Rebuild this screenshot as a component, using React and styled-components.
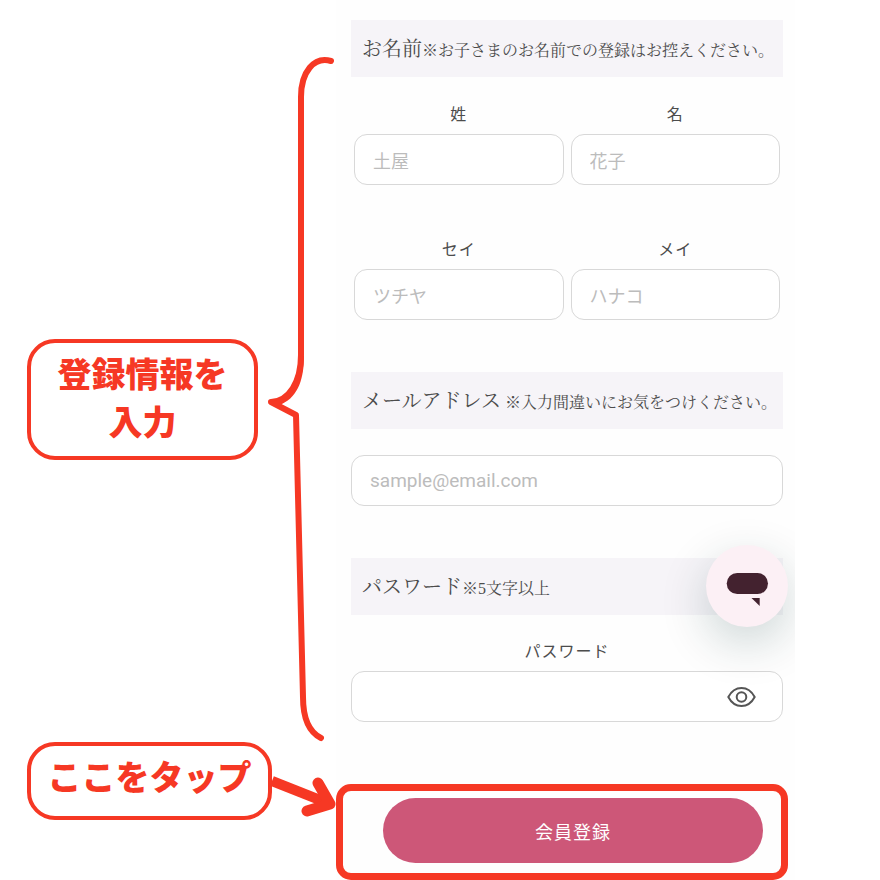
import React, { useState } from 'react';
import styled, { createGlobalStyle } from 'styled-components';

const GlobalStyle = createGlobalStyle`
  :root {
    --color-accent: #f63824;
    --color-primary: #cd5778;
    --color-text: #4c4c4c;
    --color-muted: #bcbcbc;
    --color-border: #d8d8d8;
    --font-sans: 'Noto Sans CJK JP', sans-serif;
    --font-serif: 'Liberation Serif', 'Noto Serif CJK JP', 'Noto Sans CJK JP', serif;
  }
  *, *::before, *::after {
    box-sizing: border-box;
  }
  body {
    margin: 0;
    background: #fff;
    color: var(--color-text);
    font-family: var(--font-sans);
  }
`;

const Page = styled.div`
  display: grid;
  grid-template-columns: 336fr 459fr 85fr;
`;

const Guide = styled.aside`
  min-width: 0;
  padding: 56px 0 0 27px;
`;

const GuideRow = styled.div`
  display: flex;
  align-items: center;
  gap: ${props => props.$gap || 0};
  padding-right: ${props => props.$end || 0};

  svg {
    flex: none;
    display: block;
  }
`;

const Note = styled.p`
  flex: 1;
  margin: 0;
  padding: ${props => props.$padding};
  border: 4px solid var(--color-accent);
  border-radius: 28px;
  color: var(--color-accent);
  font-size: 34px;
  font-weight: 900;
  line-height: 48px;
  text-align: center;
  white-space: nowrap;
`;

const Form = styled.form`
  min-width: 0;
  padding: 20px 12px 0 15px;
  overflow: hidden;
  background: #fefefe;
`;

const Section = styled.section`
  position: relative;
  display: flex;
  flex-direction: column;
  margin-bottom: ${props => props.$space || '52px'};
`;

const Heading = styled.h2`
  display: flex;
  align-items: baseline;
  gap: ${props => props.$gap || 0};
  margin: 0 0 ${props => props.$space || '25px'};
  padding: 13px 11px 12px;
  background: #f6f4f8;
  font-family: var(--font-serif);
  font-size: 20px;
  font-weight: 400;
  line-height: 32px;
  white-space: nowrap;
`;

const Hint = styled.small`
  font-size: 16px;
  line-height: 20px;
`;

const NameGrid = styled.div`
  display: grid;
  grid-template-columns: 1fr 1fr;
  gap: 52px 7px;
  padding: 0 3px;
`;

const Field = styled.div`
  display: flex;
  flex-direction: column;
  gap: 10px;
  min-width: 0;
`;

const Label = styled.label`
  font-size: 16px;
  letter-spacing: 1px;
  line-height: 22px;
  text-align: center;
`;

const InputBox = styled.div`
  display: flex;
  align-items: center;
  height: 51px;
  padding: 0 18px;
  border: 1px solid var(--color-border);
  border-radius: 13px;
  background: #fff;
`;

const Input = styled.input`
  flex: 1;
  min-width: 0;
  padding: 0;
  border: 0;
  outline: 0;
  background: none;
  color: var(--color-text);
  font-family: ${props => (props.type === 'email' ? "Roboto, 'Noto Sans CJK JP', sans-serif" : 'inherit')};
  font-size: ${props => (props.type === 'email' ? '19px' : '18px')};

  &::placeholder {
    color: var(--color-muted);
    opacity: 1;
  }
`;

const EyeButton = styled.button`
  display: flex;
  margin-right: 8px;
  padding: 0;
  border: 0;
  background: none;
  color: #555;
  cursor: pointer;
`;

const ChatButton = styled.button`
  position: absolute;
  top: -13px;
  right: -5px;
  width: 82px;
  height: 82px;
  padding: 0;
  border: 0;
  border-radius: 50%;
  background: #fcf0f5;
  box-shadow: 0 16px 48px rgba(0, 50, 50, 0.2);
  cursor: pointer;

  svg {
    display: block;
  }
`;

const SubmitFrame = styled.div`
  display: flex;
  margin: 0 -5px 0 -15px;
  padding: 7px 18px 10px 40px;
  border: 7px solid var(--color-accent);
  border-radius: 15px;
`;

const Submit = styled.button`
  flex: 1;
  height: 65px;
  border: 0;
  border-radius: 33px;
  background: var(--color-primary);
  color: #fff;
  font-family: inherit;
  font-size: 18px;
  letter-spacing: 1px;
  cursor: pointer;
`;

const Bracket = () => (
  <svg width="66" height="686" viewBox="268 56 66 686" fill="none" aria-hidden="true">
    <path
      d="M331 61C314 56 301 72 301 97V355C301 382 289 401 271 402L296 415L303 697C303 719 309 732 321 738"
      stroke="#f63824"
      strokeWidth="6"
      strokeLinecap="round"
      strokeLinejoin="round"
    />
    <path d="M271 402C284 400 298 384 301 355L304 356C304 377 299 396 282 404L279 406Z" fill="#f63824" />
  </svg>
);

const Arrow = () => (
  <svg width="64" height="78" viewBox="272 742 64 78" fill="none" aria-hidden="true">
    <path d="M272 781L325 802" stroke="#f63824" strokeWidth="10" />
    <path
      d="M318 783L330 804L307 811"
      stroke="#f63824"
      strokeWidth="11"
      strokeLinecap="round"
      strokeLinejoin="round"
    />
  </svg>
);

const EyeIcon = () => (
  <svg width="29" height="22" viewBox="0 0 29 22" fill="none" stroke="currentColor" strokeWidth="2">
    <path d="M1.3 11C4.5 5 9 2 14.5 2S24.5 5 27.7 11C24.5 17 20 20 14.5 20S4.5 17 1.3 11Z" strokeLinejoin="round" />
    <circle cx="14.5" cy="11" r="4.8" />
  </svg>
);

const ChatIcon = () => (
  <svg width="82" height="82" viewBox="0 0 82 82" fill="#43222f">
    <rect x="20.7" y="28" width="41.3" height="21" rx="10.5" />
    <path d="M45.5 53H53.7V61Z" />
  </svg>
);

const TextField = ({ id, label, placeholder }) => (
  <Field>
    <Label htmlFor={id}>{label}</Label>
    <InputBox>
      <Input id={id} type="text" placeholder={placeholder} />
    </InputBox>
  </Field>
);

const App = () => {
  const [visible, setVisible] = useState(false);

  return (
    <>
      <GlobalStyle />
      <Page>
        <Guide>
          <GuideRow $gap="10px" $end="2px">
            <Note $padding="6px 0 11px">
              登録情報を
              <br />
              入力
            </Note>
            <Bracket />
          </GuideRow>
          <GuideRow>
            <Note $padding="6px 0 16px">ここをタップ</Note>
            <Arrow />
          </GuideRow>
        </Guide>
        <Form onSubmit={e => e.preventDefault()}>
          <Section>
            <Heading>
              お名前<Hint>※お子さまのお名前での登録はお控えください。</Hint>
            </Heading>
            <NameGrid>
              <TextField id="last-name" label="姓" placeholder="土屋" />
              <TextField id="first-name" label="名" placeholder="花子" />
              <TextField id="last-kana" label="セイ" placeholder="ツチヤ" />
              <TextField id="first-kana" label="メイ" placeholder="ハナコ" />
            </NameGrid>
          </Section>
          <Section>
            <Heading $gap="4px" $space="26px">
              <label htmlFor="email">メールアドレス</label>
              <Hint>※入力間違いにお気をつけください。</Hint>
            </Heading>
            <InputBox>
              <Input id="email" type="email" placeholder="sample@email.com" />
            </InputBox>
          </Section>
          <Section $space="62px">
            <Heading $space="24px">
              パスワード<Hint>※5文字以上</Hint>
            </Heading>
            <Field>
              <Label htmlFor="password">パスワード</Label>
              <InputBox>
                <Input id="password" type={visible ? 'text' : 'password'} />
                <EyeButton type="button" aria-label="パスワードを表示" onClick={() => setVisible(!visible)}>
                  <EyeIcon />
                </EyeButton>
              </InputBox>
            </Field>
            <ChatButton type="button" aria-label="チャット">
              <ChatIcon />
            </ChatButton>
          </Section>
          <SubmitFrame>
            <Submit type="submit">会員登録</Submit>
          </SubmitFrame>
        </Form>
      </Page>
    </>
  );
};

export default App;
